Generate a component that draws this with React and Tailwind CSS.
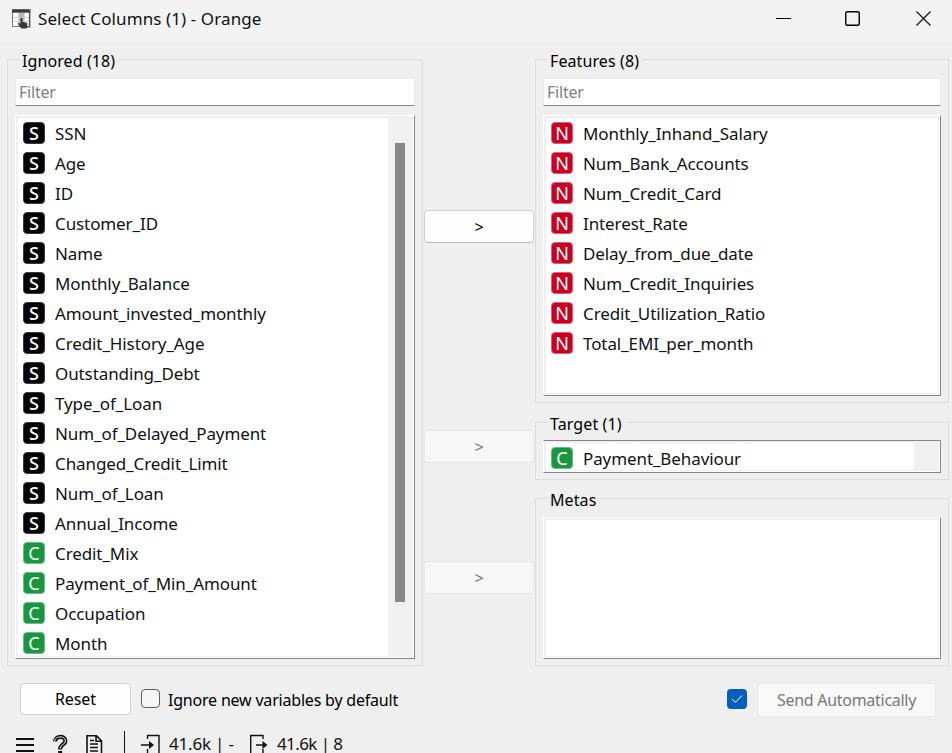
import React from "react";

const ignored = [
  ["S", "SSN"],
  ["S", "Age"],
  ["S", "ID"],
  ["S", "Customer_ID"],
  ["S", "Name"],
  ["S", "Monthly_Balance"],
  ["S", "Amount_invested_monthly"],
  ["S", "Credit_History_Age"],
  ["S", "Outstanding_Debt"],
  ["S", "Type_of_Loan"],
  ["S", "Num_of_Delayed_Payment"],
  ["S", "Changed_Credit_Limit"],
  ["S", "Num_of_Loan"],
  ["S", "Annual_Income"],
  ["C", "Credit_Mix"],
  ["C", "Payment_of_Min_Amount"],
  ["C", "Occupation"],
  ["C", "Month"],
];

const features = [
  ["N", "Monthly_Inhand_Salary"],
  ["N", "Num_Bank_Accounts"],
  ["N", "Num_Credit_Card"],
  ["N", "Interest_Rate"],
  ["N", "Delay_from_due_date"],
  ["N", "Num_Credit_Inquiries"],
  ["N", "Credit_Utilization_Ratio"],
  ["N", "Total_EMI_per_month"],
];

const badgeColors = {
  S: "bg-black border-[#3a3a3a] font-medium",
  C: "bg-[#1a9641] border-[#6cbb85]",
  N: "bg-[#ca0020] border-[#dd6075]",
};

function Variable({ type, name }) {
  return (
    <li className="flex h-[30px] shrink-0 items-center pl-[5px]">
      <span
        className={`flex size-[22px] items-center justify-center rounded-[4px] border text-[18px] leading-none text-white ${badgeColors[type]}`}
      >
        {type}
      </span>
      <span className="ml-[10px] text-[17px] leading-none tracking-[-0.1px] whitespace-nowrap text-[#111]">{name}</span>
    </li>
  );
}

function Group({ title, className, children }) {
  return (
    <section className={`flex flex-col border border-[#dcdcdc] px-[7px] pb-[6px] ${className}`}>
      <h2 className="-mt-[10px] ml-[4px] h-[22px] shrink-0 self-start bg-[#efefef] px-[3px] text-[16px] leading-[22px] tracking-[0.1px] whitespace-nowrap">
        {title}
      </h2>
      {children}
    </section>
  );
}

function Filter() {
  return (
    <input
      placeholder="Filter"
      className="mt-[6px] h-[28px] w-full shrink-0 rounded-[1px] border border-[#e9e9e9] border-b-[#85878a] bg-white px-[3px] pb-px text-[16px] tracking-[-0.2px] outline-none placeholder:text-[#808080]"
    />
  );
}

function List({ items, className, topBorder = "border-t-white", children }) {
  return (
    <div className={`flex min-h-0 border border-r-[#82878f] border-b-[#82878f] border-l-white bg-white ${topBorder} ${className}`}>
      <div className="mr-px mb-px flex min-w-0 flex-1 border-2 border-r border-b border-[#f0f0f0]">
        <ul className="flex min-w-0 flex-1 flex-col overflow-hidden">
          {items.map(([type, name]) => (
            <Variable key={name} type={type} name={name} />
          ))}
        </ul>
        {children}
      </div>
    </div>
  );
}

function MoveButton({ disabled, className }) {
  return (
    <button
      disabled={disabled}
      className={`h-[33px] w-[110px] rounded-[4px] border pt-px text-[16px] leading-none ${
        disabled ? "border-[#e8e8e8] bg-[#f8f8f8] text-[#787878]" : "border-[#d0d0d0] border-b-[#bcbcbc] bg-[#fdfdfd] text-black"
      } ${className}`}
    >
      &gt;
    </button>
  );
}

function WindowIcon() {
  return (
    <svg className="mt-[2px] ml-[12px]" width="19" height="21" viewBox="0 0 19 21">
      <path d="M.5 1h17v16.5H.5z" fill="#fff" stroke="#777" />
      <path d="M7 4h5v13H7z" fill="#b5b5b5" />
      <path d="M1.5 8.5h16M1.5 12.5h16M6.5 4v13M12.5 4v13" stroke="#d4d4d4" fill="none" />
      <path d="M0 .3h18.4v3.4H0z" fill="#3a3a3a" />
      <path d="M17.6 1v16.8h-4" stroke="#555" strokeWidth="1.5" fill="none" />
      <path d="M8.5 9.7c0-1.4 2-1.4 2 0v3l4 1.1c1 .3 1.1 1 .9 1.8l-.8 3.9H9.3L6 15.1c-.2-.9.8-1.3 1.4-.8l1.1 1z" fill="#383838" />
    </svg>
  );
}

export default function App() {
  return (
    <main className="flex h-[753px] w-[952px] flex-col overflow-hidden bg-[#efefef] font-['Noto_Sans','Open_Sans',sans-serif] text-black">
      <header className="flex h-[41px] shrink-0 items-center bg-[#f3f3f3] pb-[4px]">
        <WindowIcon />
        <h1 className="ml-[7px] text-[17px] leading-none tracking-[0.1px] whitespace-nowrap text-[#111]">
          Select Columns (1) - Orange
        </h1>
        <svg className="ml-auto" width="176" height="18" viewBox="0 0 176 18">
          <path d="M0 8.5h15" stroke="#000" />
          <rect x="69.75" y="1.75" width="13.5" height="13.5" rx="1.5" fill="none" stroke="#000" strokeWidth="1.4" />
          <path d="M140.5 1.5l14 14M154.5 1.5l-14 14" stroke="#111" strokeWidth="1.2" />
        </svg>
      </header>

      <div className="flex h-[626px] shrink-0 pt-[18px] pl-[7px]">
        <Group title="Ignored (18)" className="h-[607px] w-[416px]">
          <Filter />
          <List items={ignored} className="mt-[9px] h-[545px]">
            <div className="flex w-[24px] justify-center bg-[#f0f0f0] pt-[25px]">
              <div className="h-[459px] w-[10px] bg-[#868686]" />
            </div>
          </List>
        </Group>

        <div className="flex w-[112px] flex-col items-center pt-[151px]">
          <MoveButton />
          <MoveButton disabled className="mt-[187px]" />
          <MoveButton disabled className="mt-[98px]" />
        </div>

        <div className="flex w-[414px] flex-col">
          <Group title="Features (8)" className="h-[344px]">
            <Filter />
            <List items={features} className="mt-[9px] h-[282px]" />
          </Group>
          <Group title="Target (1)" className="mt-[19px] h-[58px]">
            <List items={[["C", "Payment_Behaviour"]]} topBorder="border-t-[#82878f]" className="mt-[5px] h-[33px]">
              <div className="w-[24px] bg-[#f0f0f0]" />
            </List>
          </Group>
          <Group title="Metas" className="mt-[18px] h-[168px]">
            <List items={[]} className="mt-[6px] h-[142px]" />
          </Group>
        </div>
      </div>

      <div className="flex h-[64px] shrink-0 items-start pt-[16px] pl-[20px] text-[16px]">
        <button className="h-[32px] w-[111px] rounded-[4px] border border-[#d0d0d0] bg-[#fdfdfd] leading-none tracking-[-0.1px]">
          Reset
        </button>
        <span className="mt-[6px] ml-[10px] size-[19px] rounded-[4px] border border-[#5f5f5f] bg-[#f6f6f6]" />
        <span className="mt-[6px] ml-[8px] leading-[22px] tracking-[-0.2px] whitespace-nowrap">Ignore new variables by default</span>
        <span className="mt-[6px] ml-auto flex size-[20px] items-center justify-center rounded-[4px] bg-[#005fb8]">
          <svg width="12" height="10" viewBox="0 0 12 10" fill="none" stroke="#fff">
            <path d="M1.2 5l3.2 3.3L11 1.5" />
          </svg>
        </span>
        <button disabled className="mr-[16px] ml-[10px] h-[34px] w-[179px] rounded-[4px] border border-[#e8e8e8] bg-[#f9f9f9] leading-none tracking-[-0.28px] text-[#787878]">
          Send Automatically
        </button>
      </div>

      <footer className="flex h-[22px] shrink-0 items-start text-[17px] leading-[20px] text-[#111]">
        <svg className="shrink-0" width="169" height="22" viewBox="0 0 169 22" fill="none" stroke="#111">
          <path d="M16 8h18M16 14h18M16 20h18" strokeWidth="2" />
          <path d="M55.2 10.5c0-6 10.2-6 10.2-.6 0 3.6-5.2 3.8-5.2 7.6v1" strokeWidth="4.2" />
          <path d="M54.6 10.5c0-6 10.8-6 10.8-.6 0 3.6-5.2 3.8-5.2 7.6v.3" stroke="#efefef" strokeWidth="1" />
          <path d="M60.2 20v2" strokeWidth="4" />
          <path d="M87 23V4.8h9.5l5 5V23M96 4.8v5.5h5.5M90 9.5h4M90 13h8M90 16.5h8M90 20h8" strokeWidth="1.6" />
          <path d="M124.5 0v22" />
          <path d="M147.5 8V4.5H159V22M147.5 22v-4M141 14h8" strokeWidth="1.4" />
          <path d="M149 10l5 4-5 4z" fill="#111" stroke="none" />
        </svg>
        <span className="w-[63px] pt-[3px] tracking-[-0.2px] whitespace-pre">41.6k | -</span>
        <svg className="ml-[17px] shrink-0" width="20" height="22" viewBox="0 0 20 22" fill="none" stroke="#111">
          <path d="M14 8V4.5H1.7V22M14 22v-4M7 14h7" strokeWidth="1.4" />
          <path d="M13.5 10l5 4-5 4z" fill="#111" stroke="none" />
        </svg>
        <span className="ml-[8px] pt-[3px] tracking-[-0.6px] whitespace-pre">41.6k | 8</span>
      </footer>
    </main>
  );
}
